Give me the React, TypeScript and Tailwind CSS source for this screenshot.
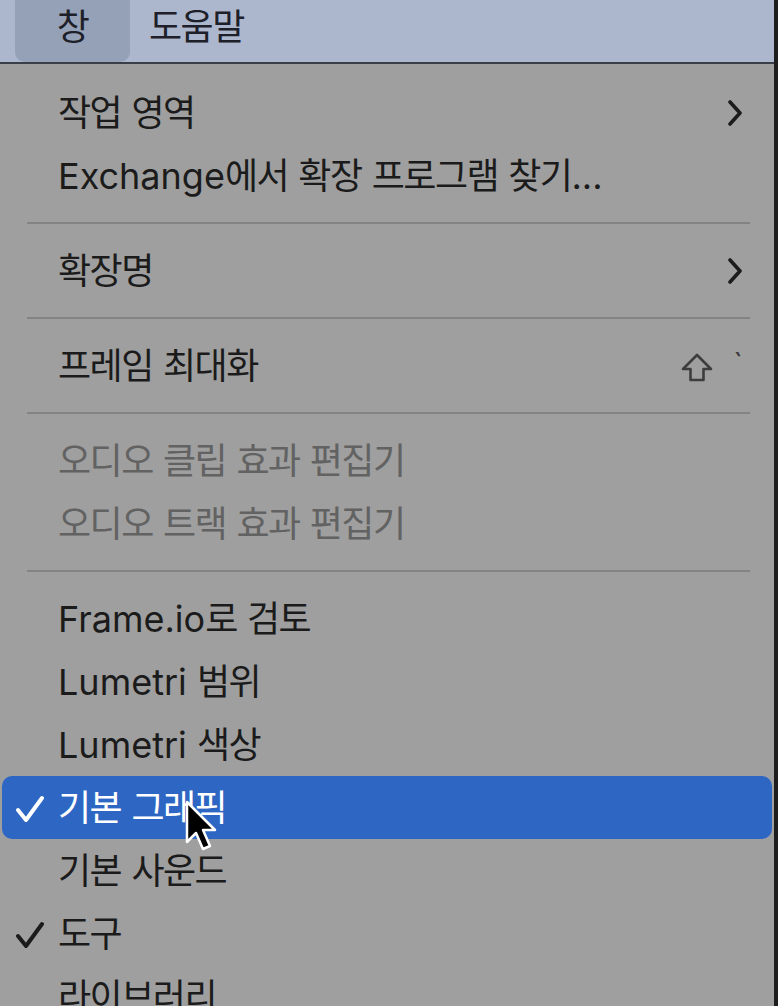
import React from "react";
import clsx from "clsx";

type ItemProps = {
  label: string;
  checked?: boolean;
  submenu?: boolean;
  shortcut?: boolean;
  disabled?: boolean;
  active?: boolean;
};

const HANGUL = /([\uac00-\ud7a3]+)/;

// Hangul runs are drawn a bit narrower than latin, like the system menu font
const Label = ({ text }: { text: string }) => (
  <>
    {text.split(HANGUL).map((part, i) =>
      HANGUL.test(part) ? (
        <span key={i} className="text-[36px] tracking-[-1.5px]">
          {part}
        </span>
      ) : (
        <span key={i} className="text-[36px]">
          {part}
        </span>
      )
    )}
  </>
);

const Check = () => (
  <svg width="28" height="28" viewBox="0 0 28 28" fill="none">
    <path d="M2 15 L10 25 L26 3" stroke="currentColor" strokeWidth="4" strokeLinecap="round" strokeLinejoin="round" />
  </svg>
);

const Chevron = () => (
  <svg width="16" height="26" viewBox="0 0 16 26" fill="none">
    <path d="M3 2 L13 13 L3 24" stroke="#1c1c1c" strokeWidth="3.6" strokeLinecap="round" strokeLinejoin="round" />
  </svg>
);

const ShiftKey = () => (
  <svg width="32" height="30" viewBox="0 0 32 30" fill="none">
    <path
      d="M16 2 L2 16 L9.5 16 L9.5 27 L22.5 27 L22.5 16 L30 16 Z"
      stroke="#3d3d3d"
      strokeWidth="2.6"
      strokeLinejoin="round"
    />
  </svg>
);

const Cursor = () => (
  <svg width="36" height="56" viewBox="0 0 36 56" className="absolute left-[183px] top-[24px]">
    <path
      d="M2 2 L2 42 L11 33 L18 49 L25 46 L18 30 L30 30 Z"
      fill="#000"
      stroke="#fff"
      strokeWidth="2.5"
      strokeLinejoin="round"
    />
  </svg>
);

const Item = ({ label, checked, submenu, shortcut, disabled, active }: ItemProps) => (
  <div
    className={clsx(
      "relative mx-[2px] flex h-[63px] items-center pl-[14px] pr-[29px]",
      active ? "rounded-[10px] bg-[#2e66c3] text-white" : disabled ? "text-[#626262]" : "text-[#1b1b1b]"
    )}
  >
    <div className="flex w-[42px] items-center pt-[2px]">{checked && <Check />}</div>
    <div className="flex-1 whitespace-nowrap leading-none">
      <Label text={label} />
    </div>
    {submenu && <Chevron />}
    {shortcut && (
      <div className="flex items-start gap-[20px] pt-[4px]">
        <ShiftKey />
        <span className="-mt-[4px] text-[30px] leading-none text-[#3d3d3d]">`</span>
      </div>
    )}
    {active && <Cursor />}
  </div>
);

const Separator = () => <div className="my-[15px] ml-[27px] mr-[24px] h-[2px] bg-[#838383]" />;

export default function App() {
  return (
    <div className="h-[1006px] overflow-hidden border-r-[4px] border-[#1d1d1d] bg-[#9f9f9f] font-[Inter,'Noto_Sans_CJK_KR',sans-serif]">
      <div className="flex h-[64px] items-stretch border-b-2 border-[#3a3e47] bg-[#acb7cd] text-[#1d2028]">
        <div className="ml-[15px] flex w-[115px] items-center justify-center rounded-b-[10px] bg-[#95a1b7] pb-[8px] leading-none">
          <Label text="창" />
        </div>
        <div className="ml-[19px] flex items-center pb-[8px] leading-none">
          <Label text="도움말" />
        </div>
      </div>

      <div className="pt-[17px]">
        <Item label="작업 영역" submenu />
        <Item label="Exchange에서 확장 프로그램 찾기..." />
        <Separator />
        <Item label="확장명" submenu />
        <Separator />
        <Item label="프레임 최대화" shortcut />
        <Separator />
        <Item label="오디오 클립 효과 편집기" disabled />
        <Item label="오디오 트랙 효과 편집기" disabled />
        <Separator />
        <Item label="Frame.io로 검토" />
        <Item label="Lumetri 범위" />
        <Item label="Lumetri 색상" />
        <Item label="기본 그래픽" checked active />
        <Item label="기본 사운드" />
        <Item label="도구" checked />
        <Item label="라이브러리" />
      </div>
    </div>
  );
}
